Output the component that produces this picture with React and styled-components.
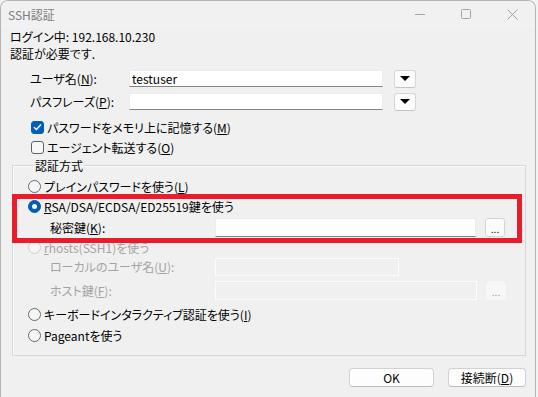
import React from 'react';
import styled, { createGlobalStyle } from 'styled-components';

const GlobalStyle = createGlobalStyle`
    html, body {
        margin: 0;
        padding: 0;
        background: #f3f3f3;
    }
    body {
        font-family: "Noto Sans CJK JP", "Liberation Sans", sans-serif;
        font-size: 12px;
        font-feature-settings: "palt";
        color: #000;
    }
`;

const Window = styled.div`
    position: relative;
    width: 536px;
    height: 397px;
    box-sizing: border-box;
    background: #f0f0f0;
    border: 1px solid #b4b4b4;
    border-bottom: none;
    border-radius: 8px 8px 0 0;
    display: flex;
    flex-direction: column;
    overflow: hidden;
`;

const TitleBar = styled.div`
    height: 27px;
    display: flex;
    align-items: center;
    padding-left: 7px;
    background: #f1f1f1;
`;

const Title = styled.span`
    flex: 1;
    color: #7c7c7c;
    font-size: 12px;
    line-height: 14px;
`;

const Control = styled.div`
    width: 46px;
    height: 27px;
    display: flex;
    align-items: center;
    justify-content: center;
    svg {
        stroke: #a2a2a2;
        fill: none;
        stroke-width: 1;
    }
`;

const Body = styled.div`
    padding: 0 9px;
    display: flex;
    flex-direction: column;
`;

const Line = styled.div`
    line-height: 17px;
    height: 17px;
    white-space: nowrap;
`;

const FormRow = styled.div`
    display: flex;
    align-items: center;
    height: 17px;
    margin: ${p => p.mt || 0}px 0 0 20px;
`;

const Label = styled.span`
    width: ${p => p.w || 99}px;
    flex-shrink: 0;
    white-space: nowrap;
    color: ${p => (p.disabled ? '#a3a3a3' : '#000')};
`;

const Input = styled.div`
    box-sizing: border-box;
    width: ${p => p.w}px;
    height: ${p => p.h || 17}px;
    background: ${p => (p.disabled ? '#f0f0f0' : '#fff')};
    border: 1px solid ${p => (p.disabled ? '#fcfcfc' : '#ececec')};
    border-bottom-color: ${p => (p.disabled ? '#fcfcfc' : '#848484')};
    padding-left: 2px;
    line-height: 15px;
    display: flex;
    align-items: center;
`;

const DropButton = styled.div`
    box-sizing: border-box;
    width: 22px;
    height: 18px;
    margin-left: 11px;
    background: #fbfbfb;
    border: 1px solid #d6d6d6;
    border-bottom-color: #c4c4c4;
    border-radius: 3px;
    display: flex;
    align-items: center;
    justify-content: center;
    &::after {
        content: '';
        border-left: 5px solid transparent;
        border-right: 5px solid transparent;
        border-top: 5px solid #000;
    }
`;

const CheckRow = styled.label`
    display: flex;
    align-items: center;
    height: 20px;
    margin-left: 21px;
    margin-top: ${p => p.mt || 0}px;
    gap: 3px;
    white-space: nowrap;
`;

const Box = styled.span`
    box-sizing: border-box;
    width: 13px;
    height: 13px;
    border-radius: 3px;
    background: ${p => (p.checked ? '#005fb8' : '#f7f7f7')};
    border: 1px solid ${p => (p.checked ? '#005fb8' : '#616161')};
    display: flex;
    align-items: center;
    justify-content: center;
`;

const Group = styled.fieldset`
    margin: 0 0 0 2px;
    padding: 2px 0 9px 15px;
    border: 1px solid #d7d7d7;
    box-shadow: inset 1px 1px 0 #fbfbfb;
    display: flex;
    flex-direction: column;
`;

const Legend = styled.legend`
    padding: 0 1px;
    margin-left: 6px;
    line-height: 17px;
`;

const RadioRow = styled.div`
    display: flex;
    align-items: center;
    height: ${p => p.h || 20}px;
    gap: 3px;
    white-space: nowrap;
    color: ${p => (p.disabled ? '#a3a3a3' : '#000')};
`;

const Radio = styled.span`
    box-sizing: border-box;
    width: 13px;
    height: 13px;
    border-radius: 50%;
    background: ${p => (p.checked ? '#005fb8' : '#f5f5f5')};
    border: 1px solid ${p => (p.checked ? '#005fb8' : p.disabled ? '#cfcfcf' : '#6a6a6a')};
    display: flex;
    align-items: center;
    justify-content: center;
    &::after {
        content: '';
        display: ${p => (p.checked ? 'block' : 'none')};
        width: 5px;
        height: 5px;
        border-radius: 50%;
        background: #fff;
    }
`;

const SubRow = styled.div`
    display: flex;
    align-items: center;
    height: ${p => p.h || 20}px;
    margin-left: 22px;
`;

const Browse = styled.div`
    box-sizing: border-box;
    width: 20px;
    height: 19px;
    margin-left: 9px;
    border-radius: 3px;
    background: ${p => (p.disabled ? '#f7f7f7' : '#fbfbfb')};
    border: 1px solid ${p => (p.disabled ? '#f7f7f7' : '#d3d3d3')};
    color: ${p => (p.disabled ? '#a0a0a0' : '#000')};
    font-size: 10px;
    line-height: 14px;
    display: flex;
    align-items: flex-end;
    justify-content: center;
`;

const Footer = styled.div`
    display: flex;
    justify-content: flex-end;
    gap: 14px;
    margin-top: 12px;
`;

const Button = styled.div`
    box-sizing: border-box;
    width: ${p => p.w}px;
    height: 19px;
    background: #fdfdfd;
    border: 1px solid #d2d2d2;
    border-bottom-color: #bdbdbd;
    border-radius: 4px;
    display: flex;
    align-items: center;
    justify-content: center;
    line-height: 14px;
`;

const Highlight = styled.div`
    position: absolute;
    left: 11px;
    top: 193px;
    width: 510px;
    height: 49px;
    box-sizing: border-box;
    border: 5px solid #e81c2a;
    pointer-events: none;
`;

function Check() {
    return (
        <svg width="9" height="8" viewBox="0 0 9 8">
            <path d="M1 4.2 L3.4 6.5 L8 1.5" stroke="#fff" strokeWidth="1.4" fill="none" />
        </svg>
    );
}

export default function App() {
    return (
        <>
            <GlobalStyle />
            <Window>
                <TitleBar>
                    <Title>SSH認証</Title>
                    <Control>
                        <svg width="11" height="11"><path d="M0 5.5 H10" /></svg>
                    </Control>
                    <Control>
                        <svg width="11" height="11"><rect x="0.5" y="0.5" width="9" height="9" rx="1" /></svg>
                    </Control>
                    <Control>
                        <svg width="11" height="11"><path d="M0.5 0.5 L10.5 10.5 M10.5 0.5 L0.5 10.5" /></svg>
                    </Control>
                </TitleBar>
                <Body>
                    <Line>ログイン中: 192.168.10.230</Line>
                    <Line>認証が必要です.</Line>
                    <FormRow mt={8}>
                        <Label>ユーザ名(<u>N</u>):</Label>
                        <Input w={254}>testuser</Input>
                        <DropButton />
                    </FormRow>
                    <FormRow mt={6}>
                        <Label>パスフレーズ(<u>P</u>):</Label>
                        <Input w={254} />
                        <DropButton />
                    </FormRow>
                    <CheckRow mt={7}>
                        <Box checked><Check /></Box>
                        <span>パスワードをメモリ上に記憶する(<u>M</u>)</span>
                    </CheckRow>
                    <CheckRow>
                        <Box />
                        <span>エージェント転送する(<u>O</u>)</span>
                    </CheckRow>
                    <Group>
                        <Legend>認証方式</Legend>
                        <RadioRow>
                            <Radio />
                            <span>プレインパスワードを使う(<u>L</u>)</span>
                        </RadioRow>
                        <RadioRow h={21}>
                            <Radio checked />
                            <span><u>R</u>SA/DSA/ECDSA/ED25519鍵を使う</span>
                        </RadioRow>
                        <SubRow>
                            <Label w={165}>秘密鍵(<u>K</u>):</Label>
                            <Input w={261} h={19} />
                            <Browse>...</Browse>
                        </SubRow>
                        <RadioRow disabled>
                            <Radio disabled />
                            <span><u>r</u>hosts(SSH1)を使う</span>
                        </RadioRow>
                        <SubRow h={19}>
                            <Label w={165} disabled>ローカルのユーザ名(<u>U</u>):</Label>
                            <Input w={184} h={18} disabled />
                        </SubRow>
                        <SubRow h={28}>
                            <Label w={165} disabled>ホスト鍵(<u>F</u>):</Label>
                            <Input w={262} h={19} disabled />
                            <Browse disabled>...</Browse>
                        </SubRow>
                        <RadioRow h={21}>
                            <Radio />
                            <span>キーボードインタラクティブ認証を使う(<u>I</u>)</span>
                        </RadioRow>
                        <RadioRow h={21}>
                            <Radio />
                            <span>Pageantを使う</span>
                        </RadioRow>
                    </Group>
                    <Footer>
                        <Button w={85}>OK</Button>
                        <Button w={78}>接続断(<u>D</u>)</Button>
                    </Footer>
                </Body>
                <Highlight />
            </Window>
        </>
    );
}
